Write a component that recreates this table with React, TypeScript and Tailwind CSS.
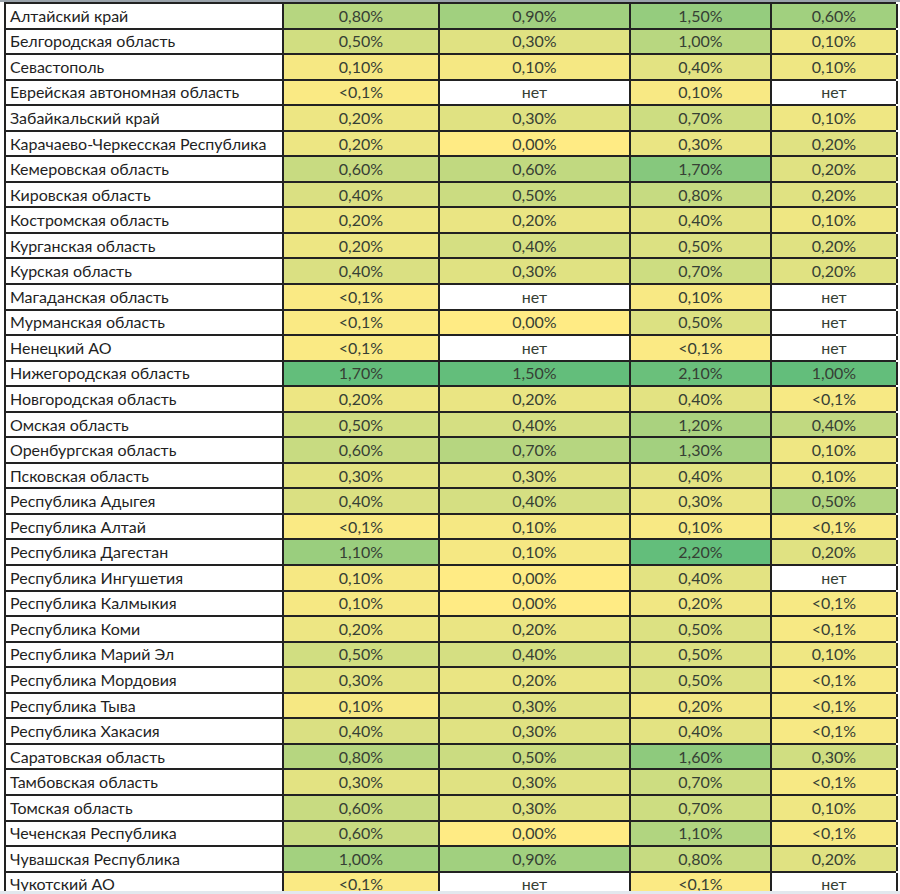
import React from 'react'

// region, then shares for four columns
const ROWS: [string, string, string, string, string][] = [
  ['Алтайский край', '0,80%', '0,90%', '1,50%', '0,60%'],
  ['Белгородская область', '0,50%', '0,30%', '1,00%', '0,10%'],
  ['Севастополь', '0,10%', '0,10%', '0,40%', '0,10%'],
  ['Еврейская автономная область', '<0,1%', 'нет', '0,10%', 'нет'],
  ['Забайкальский край', '0,20%', '0,30%', '0,70%', '0,10%'],
  ['Карачаево-Черкесская Республика', '0,20%', '0,00%', '0,30%', '0,20%'],
  ['Кемеровская область', '0,60%', '0,60%', '1,70%', '0,20%'],
  ['Кировская область', '0,40%', '0,50%', '0,80%', '0,20%'],
  ['Костромская область', '0,20%', '0,20%', '0,40%', '0,10%'],
  ['Курганская область', '0,20%', '0,40%', '0,50%', '0,20%'],
  ['Курская область', '0,40%', '0,30%', '0,70%', '0,20%'],
  ['Магаданская область', '<0,1%', 'нет', '0,10%', 'нет'],
  ['Мурманская область', '<0,1%', '0,00%', '0,50%', 'нет'],
  ['Ненецкий АО', '<0,1%', 'нет', '<0,1%', 'нет'],
  ['Нижегородская область', '1,70%', '1,50%', '2,10%', '1,00%'],
  ['Новгородская область', '0,20%', '0,20%', '0,40%', '<0,1%'],
  ['Омская область', '0,50%', '0,40%', '1,20%', '0,40%'],
  ['Оренбургская область', '0,60%', '0,70%', '1,30%', '0,10%'],
  ['Псковская область', '0,30%', '0,30%', '0,40%', '0,10%'],
  ['Республика Адыгея', '0,40%', '0,40%', '0,30%', '0,50%'],
  ['Республика Алтай', '<0,1%', '0,10%', '0,10%', '<0,1%'],
  ['Республика Дагестан', '1,10%', '0,10%', '2,20%', '0,20%'],
  ['Республика Ингушетия', '0,10%', '0,00%', '0,40%', 'нет'],
  ['Республика Калмыкия', '0,10%', '0,00%', '0,20%', '<0,1%'],
  ['Республика Коми', '0,20%', '0,20%', '0,50%', '<0,1%'],
  ['Республика Марий Эл', '0,50%', '0,40%', '0,50%', '0,10%'],
  ['Республика Мордовия', '0,30%', '0,20%', '0,50%', '<0,1%'],
  ['Республика Тыва', '0,10%', '0,30%', '0,20%', '<0,1%'],
  ['Республика Хакасия', '0,40%', '0,30%', '0,40%', '<0,1%'],
  ['Саратовская область', '0,80%', '0,50%', '1,60%', '0,30%'],
  ['Тамбовская область', '0,30%', '0,30%', '0,70%', '<0,1%'],
  ['Томская область', '0,60%', '0,30%', '0,70%', '0,10%'],
  ['Чеченская Республика', '0,60%', '0,00%', '1,10%', '<0,1%'],
  ['Чувашская Республика', '1,00%', '0,90%', '0,80%', '0,20%'],
  ['Чукотский АО', '<0,1%', 'нет', '<0,1%', 'нет'],
]

// top of each column's colour scale
const CAPS = [1.7, 1.5, 2.2, 1.0]
const LOW = [255, 235, 132]
const HIGH = [99, 190, 123]

function cellColor(v: string, col: number) {
  if (v === 'нет') return '#ffffff'
  const n = v.startsWith('<') ? 0.05 : parseFloat(v.replace(',', '.').replace('%', ''))
  const t = Math.min(1, n / CAPS[col])
  const c = LOW.map((l, i) => Math.round(l + (HIGH[i] - l) * t))
  return `rgb(${c[0]},${c[1]},${c[2]})`
}

const WIDTHS = ['w-[278px]', 'w-[156px]', 'w-[191px]', 'w-[141px]', 'w-[126px]']

export default function App() {
  return (
    <div className="h-[894px] w-[900px] overflow-hidden bg-white" style={{ fontFamily: 'Lato, "Open Sans", sans-serif' }}>
      <div className="h-[2px] bg-[#9aa3ab]" />
      <div className="h-[889px] overflow-hidden pl-[4px]">
        <div className="w-[892px] border-l-2 border-t-2 border-[#222]">
          {ROWS.map((r, i) => (
            <div key={i} className="flex h-[25.56px] border-b-2 border-[#222]">
              <div className={`${WIDTHS[0]} flex shrink-0 items-center whitespace-nowrap border-r-2 border-[#222] bg-white pl-[4px] text-[16px] leading-none text-[#1f1f1f]`}>
                {r[0]}
              </div>
              {r.slice(1).map((v, j) => (
                <div
                  key={j}
                  className={`${WIDTHS[j + 1]} flex shrink-0 items-center justify-center border-r-2 border-[#222] text-[16px] leading-none text-[#364034]`}
                  style={{ backgroundColor: cellColor(v, j) }}
                >
                  {v}
                </div>
              ))}
            </div>
          ))}
        </div>
      </div>
      <div className="h-[3px] bg-[#e2e8ee]" />
    </div>
  )
}
